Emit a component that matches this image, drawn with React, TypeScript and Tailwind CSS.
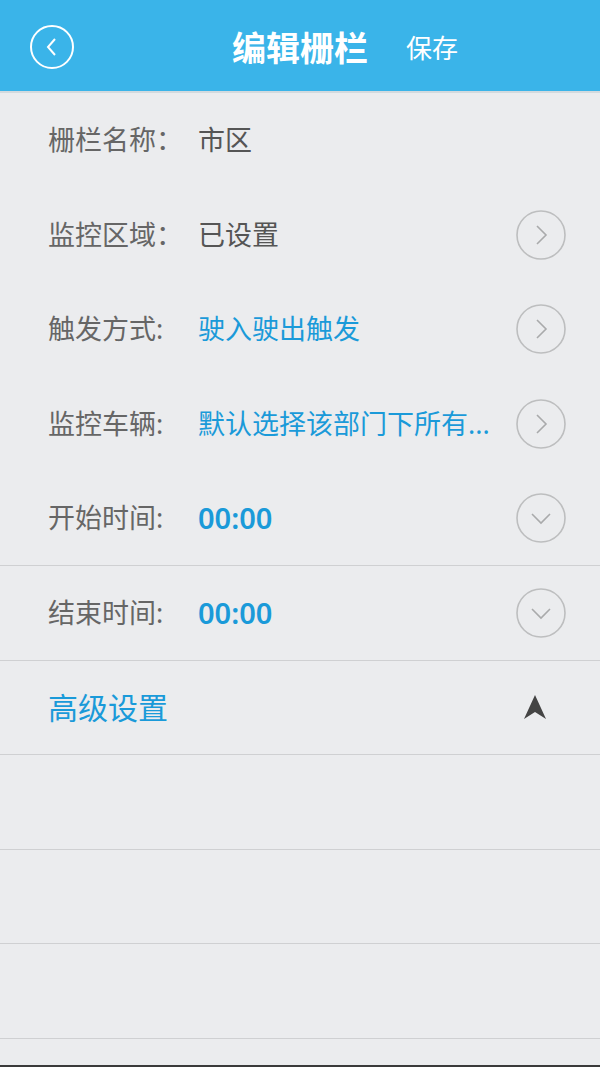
import { ReactNode } from "react";

const font = { fontFamily: '"Noto Sans", "Noto Sans CJK SC", sans-serif' };

const CircleIcon = ({ dir }: { dir: "right" | "down" }) => (
  <svg width="52" height="52" viewBox="0 0 52 52" className="shrink-0">
    <circle cx="26" cy="26" r="24" fill="none" stroke="#bdbebf" strokeWidth="1.6" />
    {dir === "right" ? (
      <path d="M22 17 L31 26 L22 35" fill="none" stroke="#a9aaab" strokeWidth="1.6" />
    ) : (
      <path d="M17 22 L26 31 L35 22" fill="none" stroke="#a9aaab" strokeWidth="1.6" />
    )}
  </svg>
);

type RowProps = {
  label: string;
  value: ReactNode;
  icon?: "right" | "down";
  border?: boolean;
};

const Row = ({ label, value, icon, border }: RowProps) => (
  <div
    className={`flex items-center h-[94.6px] pl-[48px] pr-[33px] ${border ? "border-b border-[#cfd0d2]" : ""}`}
  >
    <div className="w-[150px] shrink-0 text-[27px] text-[#666666] leading-normal">{label}</div>
    <div className="flex-1 min-w-0 truncate text-[27px] leading-normal pr-[6px]">{value}</div>
    {icon && <CircleIcon dir={icon} />}
  </div>
);

export default function App() {
  return (
    <div className="w-[600px] h-[1067px] bg-[#ebecee] flex flex-col overflow-hidden" style={font}>
      {/* Header */}
      <div className="h-[93px] bg-[#3ab4e9] flex items-center relative border-b-2 border-[#d3dade] shrink-0">
        <svg width="46" height="46" viewBox="0 0 46 46" className="absolute left-[29px] top-[24px]">
          <circle cx="23" cy="23" r="21" fill="none" stroke="white" strokeWidth="2" />
          <path d="M26 15 L19 23 L26 31" fill="none" stroke="white" strokeWidth="2" />
        </svg>
        <div className="flex items-center ml-[232px] gap-[38px] pt-[4px]">
          <span className="text-white text-[34px] font-bold leading-none">编辑栅栏</span>
          <span className="text-white text-[26px] leading-none">保存</span>
        </div>
      </div>

      <div className="flex flex-col">
        <Row label="栅栏名称：" value={<span className="text-[#555555]">市区</span>} />
        <Row label="监控区域：" value={<span className="text-[#555555]">已设置</span>} icon="right" />
        <Row label="触发方式:" value={<span className="text-[#1a9ad9]">驶入驶出触发</span>} icon="right" />
        <Row
          label="监控车辆:"
          value={<span className="text-[#1a9ad9]">默认选择该部门下所有...</span>}
          icon="right"
        />
        <Row
          label="开始时间:"
          value={<span className="text-[#1a9ad9] font-semibold text-[29px]">00:00</span>}
          icon="down"
          border
        />
        <Row
          label="结束时间:"
          value={<span className="text-[#1a9ad9] font-semibold text-[29px]">00:00</span>}
          icon="down"
          border
        />
        <div className="flex items-center justify-between h-[94.6px] pl-[48px] pr-[53px] border-b border-[#cfd0d2]">
          <span className="text-[30px] text-[#1a9ad9] leading-normal">高级设置</span>
          <svg width="24" height="26" viewBox="0 0 24 26">
            <path d="M12 1 L23 25 L12 18 L1 25 Z" fill="#444444" />
          </svg>
        </div>
        <div className="h-[94.6px] border-b border-[#cfd0d2]" />
        <div className="h-[94.6px] border-b border-[#cfd0d2]" />
        <div className="h-[94.6px] border-b border-[#cfd0d2]" />
      </div>
      <div className="flex-1" />
      <div className="h-[2px] bg-[#3a3a3a] shrink-0" />
    </div>
  );
}
